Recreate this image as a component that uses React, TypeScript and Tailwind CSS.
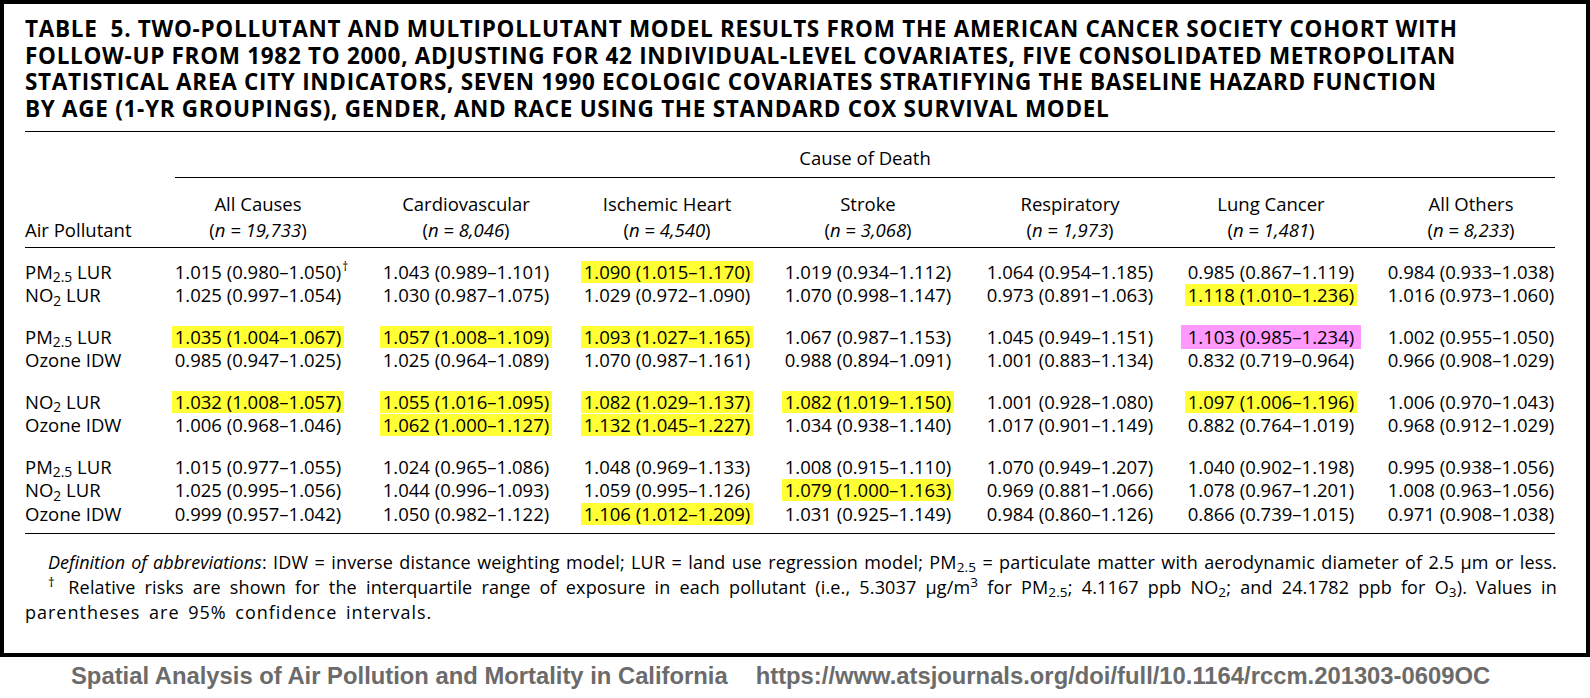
const cols = [
  { name: 'All Causes', n: '19,733' },
  { name: 'Cardiovascular', n: '8,046' },
  { name: 'Ischemic Heart', n: '4,540' },
  { name: 'Stroke', n: '3,068' },
  { name: 'Respiratory', n: '1,973' },
  { name: 'Lung Cancer', n: '1,481' },
  { name: 'All Others', n: '8,233' },
]

type Label = 'pm' | 'no2' | 'ozone'

// Y: = yellow highlight, P: = pink highlight, a trailing † gets a superscript dagger
const groups: { label: Label; cells: string[] }[][] = [
  [
    {
      label: 'pm',
      cells: ['1.015 (0.980–1.050)†', '1.043 (0.989–1.101)', 'Y:1.090 (1.015–1.170)', '1.019 (0.934–1.112)', '1.064 (0.954–1.185)', '0.985 (0.867–1.119)', '0.984 (0.933–1.038)'],
    },
    {
      label: 'no2',
      cells: ['1.025 (0.997–1.054)', '1.030 (0.987–1.075)', '1.029 (0.972–1.090)', '1.070 (0.998–1.147)', '0.973 (0.891–1.063)', 'Y:1.118 (1.010–1.236)', '1.016 (0.973–1.060)'],
    },
  ],
  [
    {
      label: 'pm',
      cells: ['Y:1.035 (1.004–1.067)', 'Y:1.057 (1.008–1.109)', 'Y:1.093 (1.027–1.165)', '1.067 (0.987–1.153)', '1.045 (0.949–1.151)', 'P:1.103 (0.985–1.234)', '1.002 (0.955–1.050)'],
    },
    {
      label: 'ozone',
      cells: ['0.985 (0.947–1.025)', '1.025 (0.964–1.089)', '1.070 (0.987–1.161)', '0.988 (0.894–1.091)', '1.001 (0.883–1.134)', '0.832 (0.719–0.964)', '0.966 (0.908–1.029)'],
    },
  ],
  [
    {
      label: 'no2',
      cells: ['Y:1.032 (1.008–1.057)', 'Y:1.055 (1.016–1.095)', 'Y:1.082 (1.029–1.137)', 'Y:1.082 (1.019–1.150)', '1.001 (0.928–1.080)', 'Y:1.097 (1.006–1.196)', '1.006 (0.970–1.043)'],
    },
    {
      label: 'ozone',
      cells: ['1.006 (0.968–1.046)', 'Y:1.062 (1.000–1.127)', 'Y:1.132 (1.045–1.227)', '1.034 (0.938–1.140)', '1.017 (0.901–1.149)', '0.882 (0.764–1.019)', '0.968 (0.912–1.029)'],
    },
  ],
  [
    {
      label: 'pm',
      cells: ['1.015 (0.977–1.055)', '1.024 (0.965–1.086)', '1.048 (0.969–1.133)', '1.008 (0.915–1.110)', '1.070 (0.949–1.207)', '1.040 (0.902–1.198)', '0.995 (0.938–1.056)'],
    },
    {
      label: 'no2',
      cells: ['1.025 (0.995–1.056)', '1.044 (0.996–1.093)', '1.059 (0.995–1.126)', 'Y:1.079 (1.000–1.163)', '0.969 (0.881–1.066)', '1.078 (0.967–1.201)', '1.008 (0.963–1.056)'],
    },
    {
      label: 'ozone',
      cells: ['0.999 (0.957–1.042)', '1.050 (0.982–1.122)', 'Y:1.106 (1.012–1.209)', '1.031 (0.925–1.149)', '0.984 (0.860–1.126)', '0.866 (0.739–1.015)', '0.971 (0.908–1.038)'],
    },
  ],
]

const gridCols = 'grid grid-cols-[142px_182px_234px_168px_234px_170px_232px_168px]'

function PollutantLabel({ label }: { label: Label }) {
  if (label === 'pm') return <>PM<sub>2.5</sub> LUR</>
  if (label === 'no2') return <>NO<sub>2</sub> LUR</>
  return <>Ozone IDW</>
}

function DataCell({ raw }: { raw: string }) {
  let text = raw
  let hl: 'y' | 'p' | null = null
  if (text.startsWith('Y:')) {
    hl = 'y'
    text = text.slice(2)
  } else if (text.startsWith('P:')) {
    hl = 'p'
    text = text.slice(2)
  }
  const dagger = text.endsWith('†')
  if (dagger) text = text.slice(0, -1)

  return (
    <div className="flex justify-center whitespace-nowrap">
      <span
        className={
          hl === 'y'
            ? 'relative inline-block bg-[#ffff33] px-[3px] leading-[22px] my-[0.75px]'
            : hl === 'p'
              ? 'relative inline-block bg-[#ff99ff] px-[7px] leading-[24px] -my-[0.25px]'
              : 'relative inline-block leading-[23.5px]'
        }
      >
        {text}
        {dagger && <span className="absolute -right-[7px] -top-[5px] text-[12px]">†</span>}
      </span>
    </div>
  )
}

export default function App() {
  return (
    <div className="w-[1590px] h-[698px] overflow-hidden bg-white font-['Open_Sans',Lato,sans-serif] text-black">
      <div className="border-4 border-black pl-[21px] pr-[31px]">
        {/* Title */}
        <h1 className="mt-[12px] text-[22.5px] font-bold leading-[26.5px] tracking-[0.7px] whitespace-nowrap">
          <div>TABLE&nbsp; 5. TWO-POLLUTANT AND MULTIPOLLUTANT MODEL RESULTS FROM THE AMERICAN CANCER SOCIETY COHORT WITH</div>
          <div>FOLLOW-UP FROM 1982 TO 2000, ADJUSTING FOR 42 INDIVIDUAL-LEVEL COVARIATES, FIVE CONSOLIDATED METROPOLITAN</div>
          <div>STATISTICAL AREA CITY INDICATORS, SEVEN 1990 ECOLOGIC COVARIATES STRATIFYING THE BASELINE HAZARD FUNCTION</div>
          <div>BY AGE (1-YR GROUPINGS), GENDER, AND RACE USING THE STANDARD COX SURVIVAL MODEL</div>
        </h1>

        <div className="mt-[9px] h-px bg-black" />

        <div className="text-[18.5px]">
          {/* Cause of Death spanner */}
          <div className="ml-[150px] pt-[14px] pb-[7px] text-center leading-[24px]">Cause of Death</div>
          <div className="ml-[150px] h-px bg-black" />

          {/* Column headers */}
          <div className={`${gridCols} pt-[12.5px] pb-[4.5px] leading-[26px]`}>
            <div className="flex items-end">Air Pollutant</div>
            {cols.map((c) => (
              <div key={c.name} className="text-center whitespace-nowrap">
                <div>{c.name}</div>
                <div>
                  (<i>n = {c.n}</i>)
                </div>
              </div>
            ))}
          </div>
          <div className="h-px bg-black" />

          {/* Body */}
          <div className="pt-[11.75px] pb-[7.75px] flex flex-col gap-[18px]">
            {groups.map((g, gi) => (
              <div key={gi}>
                {g.map((row, ri) => (
                  <div key={ri} className={`${gridCols} h-[23.5px] items-center`}>
                    <div className="leading-[23.5px] whitespace-nowrap">
                      <PollutantLabel label={row.label} />
                    </div>
                    {row.cells.map((c, ci) => (
                      <DataCell key={ci} raw={c} />
                    ))}
                  </div>
                ))}
              </div>
            ))}
          </div>
          <div className="h-px bg-black" />
        </div>

        {/* Footnotes */}
        <div className="-mr-[2px] pt-[16px] pb-[28px] text-[18px] leading-[25px] tracking-[0.15px]">
          <p className="pl-[23px] text-justify [text-align-last:justify]">
            <i className="tracking-normal">Definition of abbreviations</i>: IDW = inverse distance weighting model; LUR = land use regression model; PM<sub>2.5</sub> = particulate matter with aerodynamic diameter of 2.5 μm or less.
          </p>
          <p className="pl-[23px] text-justify [text-align-last:justify]">
            <sup>†</sup> Relative risks are shown for the interquartile range of exposure in each pollutant (i.e., 5.3037 μg/m<sup>3</sup> for PM<sub>2.5</sub>; 4.1167 ppb NO<sub>2</sub>; and 24.1782 ppb for O<sub>3</sub>). Values in
          </p>
          <p className="tracking-[1px] [word-spacing:3px]">parentheses are 95% confidence intervals.</p>
        </div>
      </div>

      {/* Source caption */}
      <div className="mt-[6px] pl-[71px] flex gap-[28px] whitespace-nowrap font-['Liberation_Sans',Arial,sans-serif] text-[23.8px] font-bold leading-[26px] text-[#6b6b6b]">
        <span>Spatial Analysis of Air Pollution and Mortality in California</span>
        <span>https://www.atsjournals.org/doi/full/10.1164/rccm.201303-0609OC</span>
      </div>
    </div>
  )
}
